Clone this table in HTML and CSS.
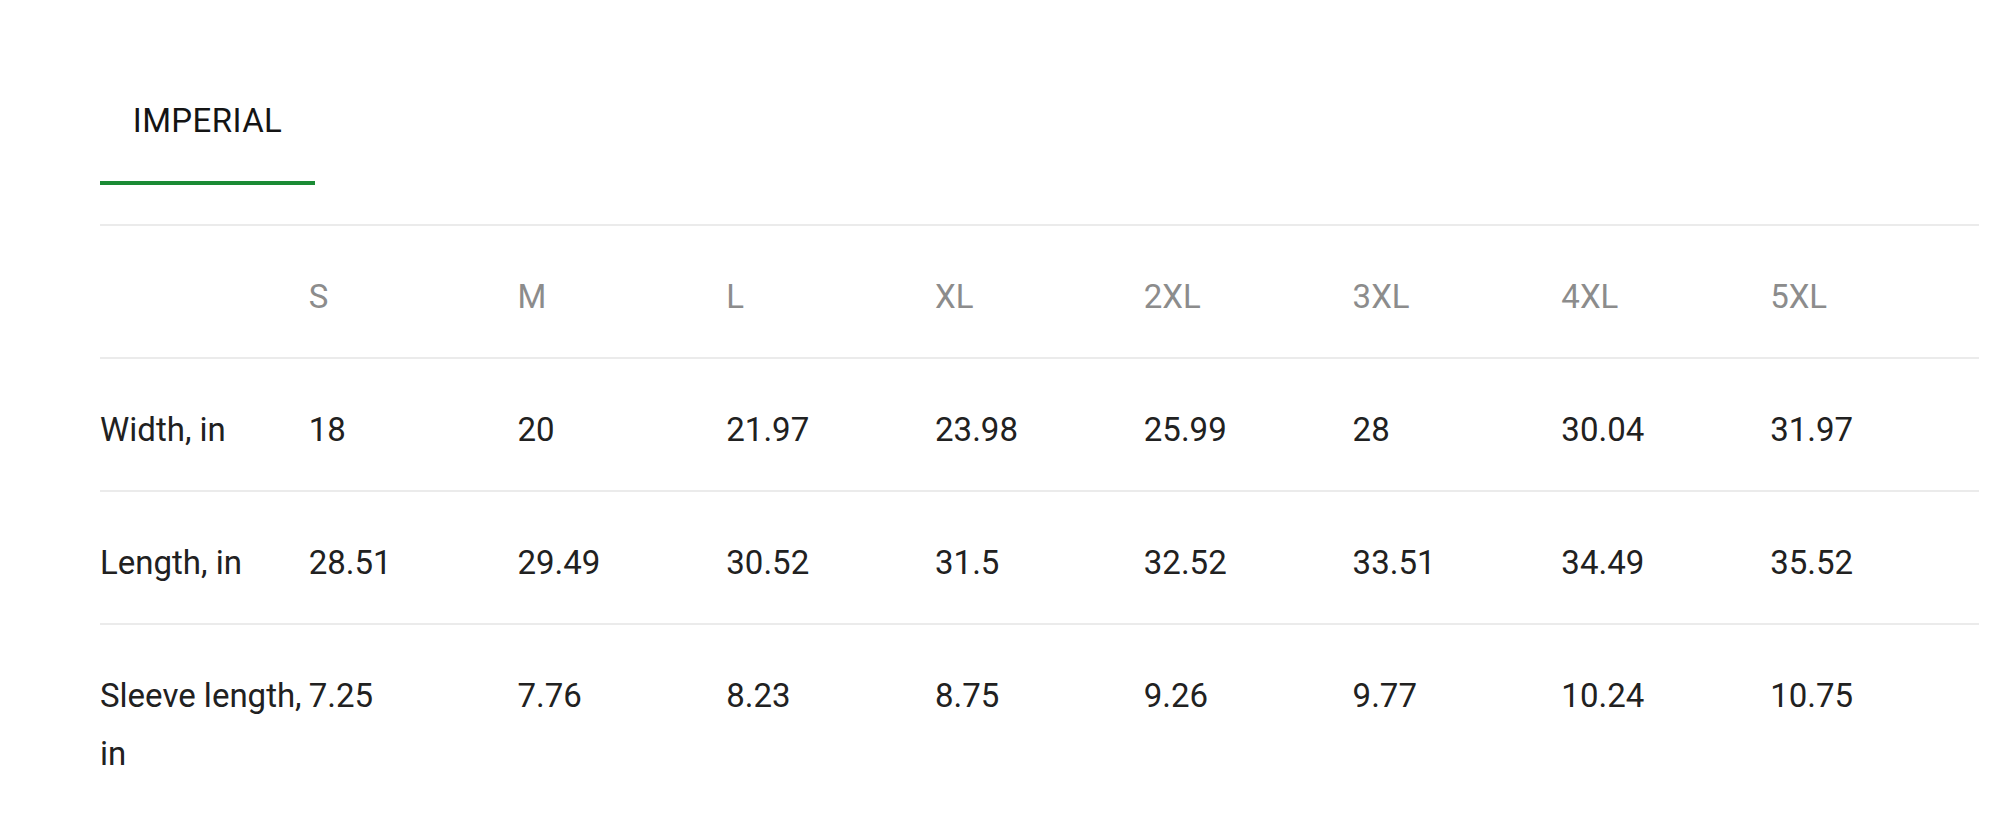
FILE: index.html
```html
<!DOCTYPE html>
<html lang="en">
<head>
<meta charset="utf-8">
<title>Size chart</title>
<link rel="stylesheet" href="styles.css">
</head>
<body>
<div class="page">
  <div class="tabs">
    <div class="tab tab-active">IMPERIAL</div>
  </div>
  <table class="sizes">
    <thead>
      <tr>
        <th></th>
        <th>S</th>
        <th>M</th>
        <th>L</th>
        <th>XL</th>
        <th>2XL</th>
        <th>3XL</th>
        <th>4XL</th>
        <th>5XL</th>
      </tr>
    </thead>
    <tbody>
      <tr>
        <td>Width, in</td>
        <td>18</td>
        <td>20</td>
        <td>21.97</td>
        <td>23.98</td>
        <td>25.99</td>
        <td>28</td>
        <td>30.04</td>
        <td>31.97</td>
      </tr>
      <tr>
        <td>Length, in</td>
        <td>28.51</td>
        <td>29.49</td>
        <td>30.52</td>
        <td>31.5</td>
        <td>32.52</td>
        <td>33.51</td>
        <td>34.49</td>
        <td>35.52</td>
      </tr>
      <tr>
        <td>Sleeve length, in</td>
        <td>7.25</td>
        <td>7.76</td>
        <td>8.23</td>
        <td>8.75</td>
        <td>9.26</td>
        <td>9.77</td>
        <td>10.24</td>
        <td>10.75</td>
      </tr>
    </tbody>
  </table>
</div>
</body>
</html>
```

FILE: styles.css
```css
html, body {
  margin: 0;
  padding: 0;
  background: #ffffff;
}

body {
  font-family: Roboto, "Liberation Sans", Arial, sans-serif;
  font-size: 33px;
  line-height: 58px;
  color: #212121;
}

.page {
  padding: 0 21px 0 100px;
}

.tabs {
  display: flex;
  padding-top: 92px;
  margin-bottom: 39px;
}

.tab {
  width: 215px;
  box-sizing: border-box;
  text-align: center;
  padding-bottom: 31px;
  letter-spacing: 0.4px;
  color: #141414;
  border-bottom: 4px solid transparent;
}

.tab-active {
  border-bottom-color: #1b8b35;
}

.sizes {
  width: 100%;
  table-layout: fixed;
  border-collapse: collapse;
  border-top: 2px solid #ebebeb;
}

.sizes th,
.sizes td {
  padding: 42px 0 31px 0;
  text-align: left;
  vertical-align: top;
  font-weight: 400;
}

.sizes th {
  color: #8c8c8c;
}

.sizes thead tr,
.sizes tbody tr {
  border-bottom: 2px solid #ebebeb;
}

.sizes tbody tr:last-child {
  border-bottom: none;
}
```
